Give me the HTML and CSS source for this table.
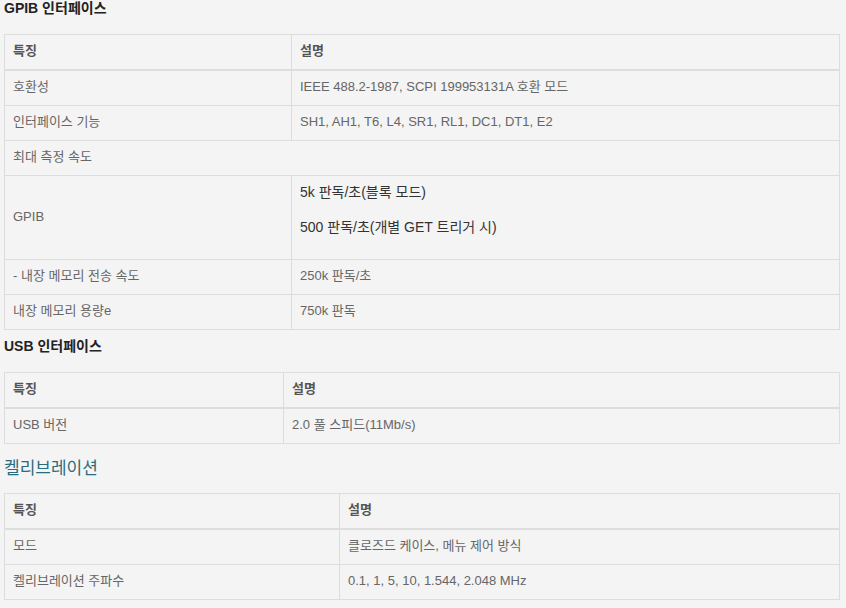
FILE: index.html
```html
<!DOCTYPE html>
<html lang="ko">
<head>
<meta charset="utf-8">
<link rel="stylesheet" href="styles.css">
</head>
<body>
<div class="page">
  <h4 class="sec-title">GPIB 인터페이스</h4>
  <table class="spec spec-gpib">
    <thead><tr><th>특징</th><th>설명</th></tr></thead>
    <tbody>
      <tr><td>호환성</td><td>IEEE 488.2-1987, SCPI 199953131A 호환 모드</td></tr>
      <tr><td>인터페이스 기능</td><td>SH1, AH1, T6, L4, SR1, RL1, DC1, DT1, E2</td></tr>
      <tr><td colspan="2">최대 측정 속도</td></tr>
      <tr><td class="mid">GPIB</td><td><p class="para">5k 판독/초(블록 모드)</p><p class="para para-last">500 판독/초(개별 GET 트리거 시)</p></td></tr>
      <tr><td>- 내장 메모리 전송 속도</td><td>250k 판독/초</td></tr>
      <tr><td>내장 메모리 용량e</td><td>750k 판독</td></tr>
    </tbody>
  </table>
  <h4 class="sec-title">USB 인터페이스</h4>
  <table class="spec spec-usb">
    <thead><tr><th>특징</th><th>설명</th></tr></thead>
    <tbody>
      <tr><td>USB 버전</td><td>2.0 풀 스피드(11Mb/s)</td></tr>
    </tbody>
  </table>
  <h3 class="sec-title-lg">켈리브레이션</h3>
  <table class="spec spec-cal">
    <thead><tr><th>특징</th><th>설명</th></tr></thead>
    <tbody>
      <tr><td>모드</td><td>클로즈드 케이스, 메뉴 제어 방식</td></tr>
      <tr><td>켈리브레이션 주파수</td><td>0.1, 1, 5, 10, 1.544, 2.048 MHz</td></tr>
    </tbody>
  </table>
</div>
</body>
</html>
```
FILE: styles.css
```css
html, body {
  margin: 0;
  padding: 0;
  background: #f4f4f4;
}
body {
  font-family: "Liberation Sans", Arial, "Noto Sans CJK KR", sans-serif;
  font-size: 13px;
  line-height: 18px;
  color: #666;
}
.page {
  padding: 0 6px 0 4px;
}
.sec-title {
  margin: 0;
  font-size: 14px;
  font-weight: bold;
  color: #222;
  height: 34px;
  line-height: 16px;
}
.sec-title-lg {
  margin: 0;
  font-size: 17px;
  font-weight: normal;
  color: #2b6c7c;
  line-height: 26px;
  padding: 4px 0 11px;
}
.spec {
  width: 100%;
  border-collapse: collapse;
  border: 1px solid #ddd;
  margin-bottom: 8px;
}
.spec th, .spec td {
  border: 1px solid #ddd;
  padding: 7px 8px 9px;
  text-align: left;
  vertical-align: top;
  line-height: 18px;
}
.spec th {
  font-weight: bold;
  color: #555;
  border-bottom: 2px solid #ddd;
}
.spec td.mid {
  vertical-align: middle;
}
.spec-gpib th:first-child { width: 270px; }
.spec-usb th:first-child { width: 262px; }
.spec-cal th:first-child { width: 318px; }
.para {
  margin: 0 0 17px;
  color: #333;
  font-size: 14px;
  line-height: 18px;
}
.para-last {
  margin-bottom: 14px;
}
```
